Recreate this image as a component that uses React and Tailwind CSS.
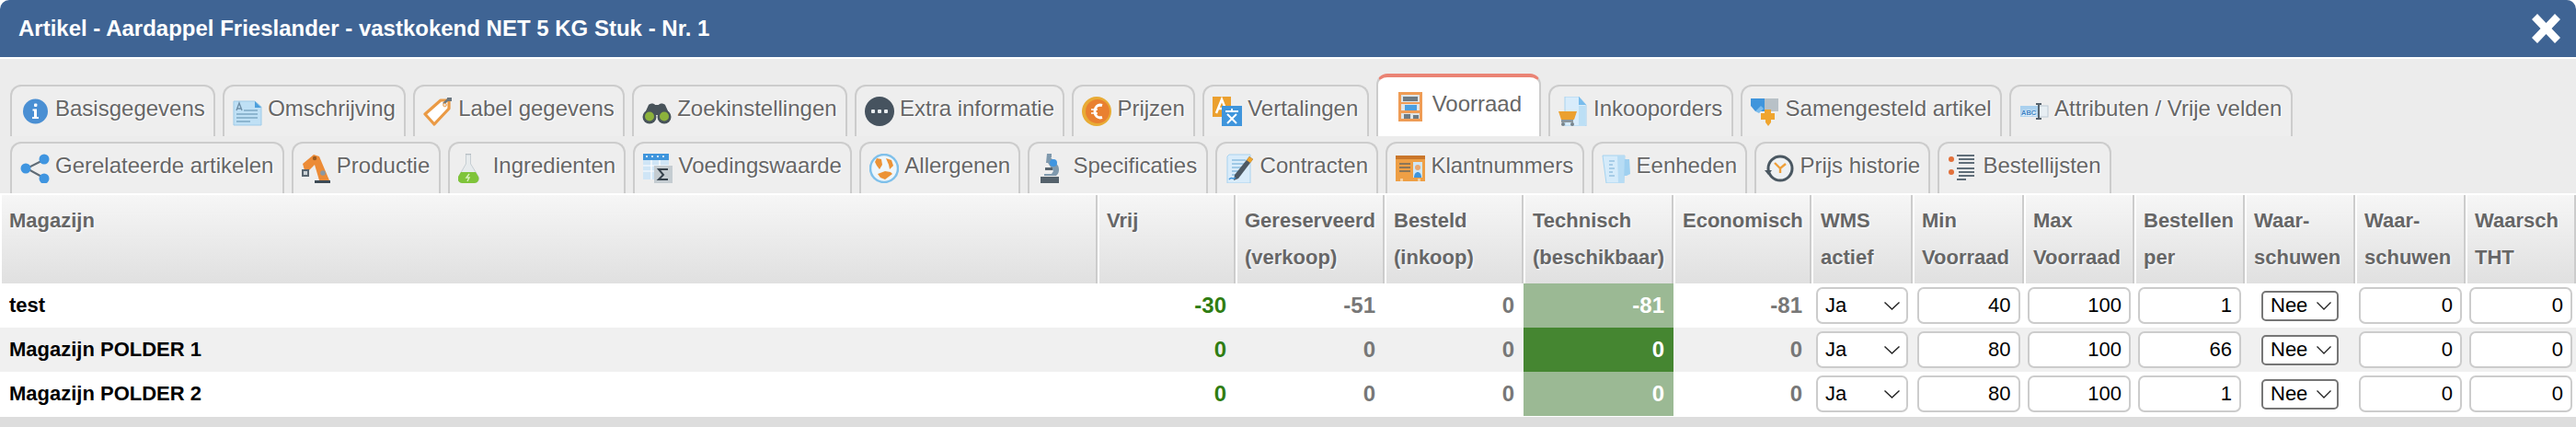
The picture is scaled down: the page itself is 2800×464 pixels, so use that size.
import React from "react";

const S = ({ children }) => (
  <svg viewBox="0 0 32 32" className="w-[32px] h-[32px] shrink-0">{children}</svg>
);

const icons = {
  info: (
    <S>
      <circle cx="16.5" cy="16" r="13.5" fill="#4a8fd3" />
      <rect x="15" y="7.5" width="3.4" height="3.4" rx="1" fill="#fff" />
      <path d="M13.5 13.5h4.5v8.5h2v2h-7v-2h2v-6.500h-1.500z" fill="#fff" />
    </S>
  ),
  doc: (
    <S>
      <path d="M1 5h23l7 6v20H1z" fill="#bfe0f5" stroke="#9fcbe8" />
      <path d="M24 5l7 7h-7z" fill="#4d9fdc" />
      <path d="M4 15l3-8 3 8M5 13h4" stroke="#6f8fa8" strokeWidth="1.400" fill="none" />
      <path d="M12 15h15M4 19h23M4 23h23M4 27h15" stroke="#7ea8c4" strokeWidth="1.500" />
    </S>
  ),
  tag: (
    <S>
      <path d="M19 4h9v9L12 30 2 19z" fill="#fff" stroke="#ea9a45" strokeWidth="3.200" strokeLinejoin="round" />
      <path d="M22 8l6-6" stroke="#6b7780" strokeWidth="2.500" />
      <rect x="26" y="1" width="5" height="4" fill="#6b7780" />
      <circle cx="23.500" cy="9" r="1.800" fill="#e8e8e8" stroke="#ea9a45" />
    </S>
  ),
  binoc: (
    <S>
      <path d="M7 9c2-2 6-2 7 0h4c1-2 5-2 7 0l5 11H2z" fill="#48535a" />
      <circle cx="8" cy="22" r="7.500" fill="#48535a" />
      <circle cx="24" cy="22" r="7.500" fill="#48535a" />
      <circle cx="8" cy="21.500" r="5" fill="#8cb23c" />
      <circle cx="24" cy="21.500" r="5" fill="#8cb23c" />
    </S>
  ),
  dots: (
    <S>
      <circle cx="16" cy="16" r="16" fill="#46535f" />
      <rect x="7" y="14" width="4" height="4" rx="1" fill="#e8edf0" />
      <rect x="14" y="14" width="4" height="4" rx="1" fill="#e8edf0" />
      <rect x="21" y="14" width="4" height="4" rx="1" fill="#e8edf0" />
    </S>
  ),
  coin: (
    <S>
      <circle cx="16" cy="16" r="16" fill="#e8ab35" />
      <circle cx="17" cy="16" r="13" fill="#e98030" />
      <path d="M22 9.500c-5-1.500-8 2-8 6.500s3 8 8 6.500" stroke="#fff" strokeWidth="3" fill="none" />
      <path d="M10 14h7M10 18h7" stroke="#fff" strokeWidth="1.500" />
    </S>
  ),
  trans: (
    <S>
      <rect x="0" y="0" width="20" height="22" fill="#eba02f" />
      <path d="M4 18L10 3l6 15M6.500 13h7" stroke="#fff" strokeWidth="2.500" fill="none" />
      <rect x="10" y="10" width="22" height="22" fill="#3f95dc" />
      <path d="M14 16h14M21 13v3M16 19l10 10M26 19L16 29" stroke="#fff" strokeWidth="2" fill="none" />
    </S>
  ),
  shelf: (
    <S>
      <rect x="3" y="0" width="26" height="32" fill="#ef9c55" />
      <rect x="6" y="3" width="20" height="8" fill="#dfe5e8" />
      <rect x="6" y="13" width="20" height="7" fill="#dfe5e8" />
      <rect x="6" y="23" width="20" height="6" fill="#dfe5e8" />
      <rect x="8" y="5" width="16" height="5" fill="#6e7b84" />
      <rect x="10" y="14" width="13" height="6" fill="#4b9fe0" />
      <rect x="9" y="24" width="7" height="5" fill="#6e7b84" />
      <rect x="19" y="25" width="6" height="4" fill="#6e7b84" />
    </S>
  ),
  cart: (
    <S>
      <path d="M7 0h15l8 9v23H7z" fill="#d8ecfb" stroke="#a8d2ef" />
      <path d="M22 0l8 9h-8z" fill="#78bcec" />
      <path d="M22 10h7v21h-7z" fill="#bcdff5" />
      <path d="M0 16h20l-3 9H3z" fill="#eba02f" />
      <path d="M3 25h13v3H3z" fill="#8a969e" />
      <circle cx="5" cy="30" r="2" fill="#77838b" />
      <circle cx="15" cy="30" r="2" fill="#77838b" />
    </S>
  ),
  puzzle: (
    <S>
      <path d="M0 2h15v14H5l-5-6z" fill="#3f95dc" />
      <path d="M15 2h15v14H15z" fill="#b8c1c7" />
      <path d="M5 16l6-6 3 3-5 5z" fill="#7cbcec" />
      <path d="M11 18h4v-4h7v4h4v7h-4v3l-3 4-3-4v-3h-5z" fill="#efa52f" />
    </S>
  ),
  attr: (
    <S>
      <rect x="1" y="10" width="20" height="12" fill="#a9d0ee" />
      <rect x="21" y="10" width="10" height="12" fill="#e7eef3" stroke="#bccad4" />
      <text x="2" y="19.500" fontSize="7.500" fontWeight="700" fill="#3b82c4" fontFamily="Liberation Sans">ABC</text>
      <path d="M18 8h6M18 24h6M21 8v16" stroke="#56636d" strokeWidth="2" />
    </S>
  ),
  share: (
    <S>
      <path d="M27 6L7 16l20 11" stroke="#5f6b75" strokeWidth="2" fill="none" />
      <circle cx="26" cy="6" r="5.500" fill="#3f95e0" />
      <circle cx="6" cy="16" r="5.500" fill="#3f95e0" />
      <circle cx="26" cy="27" r="5.500" fill="#3f95e0" />
    </S>
  ),
  robot: (
    <S>
      <path d="M1 11L13 1l6 2 11 26H19l-5-17-6 6H3z" fill="#ec8b36" />
      <path d="M14 29h17v3H14z" fill="#3d4a55" />
      <circle cx="14" cy="5" r="2.200" fill="#9b5b20" />
      <circle cx="23" cy="21" r="2.800" fill="#8a98a3" />
      <rect x="0" y="17" width="8" height="8" fill="#59656f" />
      <rect x="2" y="19" width="4" height="4" fill="#ccd3d8" />
    </S>
  ),
  flask: (
    <S>
      <rect x="8" y="0" width="6" height="2" fill="#aab1b6" />
      <path d="M8.500 1h5v10l8 13a5 5 0 0 1-4 8H5a5 5 0 0 1-4-8l7.500-13z" fill="#e7ebed" stroke="#c6ced3" />
      <path d="M3 20h16l3 5a5 5 0 0 1-5 7H5a5 5 0 0 1-5-7z" fill="#7fc43a" />
      <path d="M12 22l-3 4h3l-2 4" stroke="#d9f0bc" strokeWidth="1.500" fill="none" />
    </S>
  ),
  sigma: (
    <S>
      <rect x="0" y="0" width="28" height="28" fill="#cfe5f6" />
      <rect x="0" y="0" width="28" height="7" fill="#3f95dc" />
      <path d="M3 3h2M9 3h2M15 3h2M21 3h2" stroke="#fff" strokeWidth="1.600" />
      <path d="M0 13h28M0 19h28M9 7v21M18 7v21" stroke="#fff" strokeWidth="1.200" />
      <rect x="12" y="13" width="20" height="19" fill="#c4ccd1" />
      <path d="M27 17h-10l5 6-5 5h10" stroke="#36424c" strokeWidth="2" fill="none" />
    </S>
  ),
  globe: (
    <S>
      <circle cx="16" cy="16" r="15" fill="#eef6fb" stroke="#7fc0ea" strokeWidth="2.500" />
      <path d="M8 5l5 1 1 6-3 5-3-4-2-4zM18 5l6 2 2 6-4 4-1-5zM9 22l8-3 6 1 2 2-8 6-5-2z" fill="#ec9336" />
    </S>
  ),
  micro: (
    <S>
      <path d="M10 0h5v4h-1l8 9c2 4 1 9-2 11H7v-2h8l2-3-6-9-2 0z" fill="#7f99ad" />
      <circle cx="17" cy="10" r="4" fill="#3f95e0" />
      <rect x="8" y="15" width="8" height="3" fill="#57646e" />
      <rect x="3" y="25" width="20" height="7" fill="#55626c" />
    </S>
  ),
  contract: (
    <S>
      <path d="M4 1h23v31H2V3z" fill="#d9ecfa" stroke="#a8d2ef" />
      <path d="M7 7h15M7 11h15M7 15h14M7 19h10M7 23h7" stroke="#8cbde0" strokeWidth="1.300" />
      <path d="M26 3l4 3-16 21-5 2 1-6z" fill="#4d5963" />
      <path d="M26 3l4 3-3 4-4-3z" fill="#efa52f" />
      <path d="M4 28c3-4 4 1 7-2" stroke="#3f95dc" strokeWidth="1.500" fill="none" />
    </S>
  ),
  client: (
    <S>
      <rect x="0" y="2" width="32" height="28" fill="#ee9f45" />
      <rect x="0" y="2" width="32" height="4" fill="#c9762a" />
      <path d="M4 11h12M4 15h12M4 19h12" stroke="#8d7758" strokeWidth="1.800" />
      <rect x="19" y="9" width="10" height="17" fill="#cfe7f8" />
      <circle cx="24" cy="15" r="3" fill="#e9a872" />
      <path d="M20 26c0-8 8-8 8 0z" fill="#3f95dc" />
      <rect x="5" y="27" width="3" height="3" fill="#f7cf9c" />
      <rect x="24" y="27" width="3" height="3" fill="#f7cf9c" />
    </S>
  ),
  jug: (
    <S>
      <path d="M1 2h24l-1 30H5z" fill="#d5ebfa" stroke="#a6d3f0" />
      <path d="M24 6h6l1 16-4 2-3 0z" fill="#9fd0f0" />
      <path d="M17 2h8l-1 30h-6z" fill="#b7dcf4" />
      <path d="M8 8h6M8 12h4M8 16h6M8 20h4M8 24h6" stroke="#78aed3" strokeWidth="1.200" />
    </S>
  ),
  clock: (
    <S>
      <circle cx="17" cy="16" r="13" fill="#eef1f3" stroke="#4a5761" strokeWidth="3" />
      <path d="M11 10l6 6 6-5M17 16v5" stroke="#efa03a" strokeWidth="2.400" fill="none" />
      <path d="M0 18h8l-4 5z" fill="#4a5761" />
    </S>
  ),
  list: (
    <S>
      <circle cx="4" cy="6" r="3" fill="#e2703a" />
      <circle cx="4" cy="20" r="3" fill="#e2703a" />
      <path d="M10 2h19M12 6h17M12 10h17M10 16h19M12 20h17M12 24h17M10 28h10" stroke="#5f6d78" strokeWidth="2.200" />
    </S>
  ),
};

const row1 = [
  ["Basisgegevens", "info"],
  ["Omschrijving", "doc"],
  ["Label gegevens", "tag"],
  ["Zoekinstellingen", "binoc"],
  ["Extra informatie", "dots"],
  ["Prijzen", "coin"],
  ["Vertalingen", "trans"],
  ["Voorraad", "shelf", true],
  ["Inkooporders", "cart"],
  ["Samengesteld artikel", "puzzle"],
  ["Attributen / Vrije velden", "attr"],
];
const row2 = [
  ["Gerelateerde artikelen", "share"],
  ["Productie", "robot"],
  ["Ingredienten", "flask"],
  ["Voedingswaarde", "sigma"],
  ["Allergenen", "globe"],
  ["Specificaties", "micro"],
  ["Contracten", "contract"],
  ["Klantnummers", "client"],
  ["Eenheden", "jug"],
  ["Prijs historie", "clock"],
  ["Bestellijsten", "list"],
];

function Tab({ label, icon, active }) {
  if (active) {
    return (
      <div className="h-[68px] flex items-start gap-[8px] pl-[19px] pr-[19px] pt-[16px] bg-white rounded-t-[12px] border-x-2 border-[#ccc] border-t-[4px] border-t-[#ea8374] text-[24px] leading-[32px] text-[#666]">
        {icons[icon]}
        <span className="-mt-[3px]">{label}</span>
      </div>
    );
  }
  return (
    <div className="h-[56px] flex items-start gap-[6px] pl-[9px] pr-[9.4px] pt-[11px] bg-[#eee] rounded-t-[12px] border-x-2 border-t-2 border-[#ccc] text-[24px] leading-[32px] text-[#666] [text-shadow:0_0_3px_#fff,1px_1px_1px_#fff]">
      {icons[icon]}
      <span className="-mt-[3px]">{label}</span>
    </div>
  );
}

const th =
  "align-top text-left font-bold text-[22px] leading-[40px] text-[#666] pt-[8px] pb-[8px] pl-[8px] pr-0 border-l-2 border-l-white border-r-2 border-r-[#ccc] bg-gradient-to-b from-[#f6f6f6] to-[#e0e0e0] whitespace-nowrap overflow-hidden [text-shadow:1px_1px_2px_#fff]";

const numBase = "p-0 pr-[10px] text-right font-bold text-[24px]";

function Sel({ value, small }) {
  if (small) {
    return (
      <div className="relative w-[84px] h-[33px] mx-auto">
        <select
          defaultValue={value}
          className="appearance-none w-full h-full bg-white border-2 border-[#767676] rounded-[5px] pl-[8px] text-[22px] leading-[28px] text-black outline-none"
        >
          <option>Nee</option>
          <option>Ja</option>
        </select>
        <svg viewBox="0 0 16 9" className="absolute right-[8px] top-[12px] w-[16px] h-[9px] pointer-events-none">
          <path d="M.5.500L8 8 15.500.500" stroke="#222" strokeWidth="1.300" fill="none" />
        </svg>
      </div>
    );
  }
  return (
    <div className="relative w-[100px] h-[40px] mx-auto">
      <select
        defaultValue={value}
        className="appearance-none w-full h-full bg-white border-2 border-[#ccc] rounded-[7px] pl-[8px] text-[22px] leading-[28px] text-black outline-none"
      >
        <option>Ja</option>
        <option>Nee</option>
      </select>
      <svg viewBox="0 0 17 9" className="absolute right-[9px] top-[16px] w-[17px] h-[9px] pointer-events-none">
        <path d="M.5.500L8.500 8 16.500.500" stroke="#222" strokeWidth="1.400" fill="none" />
      </svg>
    </div>
  );
}

function Num({ value }) {
  return (
    <input
      type="text"
      readOnly
      value={value}
      className="block mx-auto w-[112px] h-[40px] bg-white border-2 border-[#ccc] rounded-[7px] text-right pr-[8px] text-[22px] text-black outline-none"
    />
  );
}

const rows = [
  { name: "test", vrij: "-30", res: "-51", best: "0", tech: "-81", eco: "-81", min: "40", max: "100", per: "1", bg: "bg-white", techBg: "bg-[#9bb994]" },
  { name: "Magazijn POLDER 1", vrij: "0", res: "0", best: "0", tech: "0", eco: "0", min: "80", max: "100", per: "66", bg: "bg-[#f0f0f0]", techBg: "bg-[#458631]" },
  { name: "Magazijn POLDER 2", vrij: "0", res: "0", best: "0", tech: "0", eco: "0", min: "80", max: "100", per: "1", bg: "bg-white", techBg: "bg-[#9bb994]" },
];

export default function App() {
  return (
    <div className="w-[2800px] h-[464px] overflow-hidden flex flex-col bg-white font-['Liberation_Sans',Arial,sans-serif]">
      <div className="h-[62px] shrink-0 flex items-center justify-between bg-[#3f6494] rounded-t-[10px] pl-[20px] pr-[17px]">
        <span className="text-[24px] font-bold text-white">
          Artikel - Aardappel Frieslander - vastkokend NET 5 KG Stuk - Nr. 1
        </span>
        <svg viewBox="0 0 31 32" className="w-[31px] h-[32px]">
          <path d="M6 0l9.500 10L25 0l6 6-9.500 10L31 26l-6 6-9.500-10L6 32l-6-6 9.500-10L0 6z" fill="#fff" />
        </svg>
      </div>
      <div className="h-[146px] mt-[2px] shrink-0 bg-[#ececec] pl-[11px] pt-[16px]">
        <div className="h-[68px] flex items-end gap-[8px]">
          {row1.map(([l, i, a]) => (
            <Tab key={l} label={l} icon={i} active={a} />
          ))}
        </div>
        <div className="mt-[6px] h-[56px] flex items-end gap-[8px]">
          {row2.map(([l, i]) => (
            <Tab key={l} label={l} icon={i} />
          ))}
        </div>
      </div>
      <table className="mt-[2px] shrink-0 table-fixed border-separate border-spacing-0 w-[2800px]">
        <colgroup>
          <col className="w-[1193px]" />
          <col className="w-[150px]" />
          <col className="w-[162px]" />
          <col className="w-[151px]" />
          <col className="w-[163px]" />
          <col className="w-[150px]" />
          <col className="w-[110px]" />
          <col className="w-[121px]" />
          <col className="w-[120px]" />
          <col className="w-[120px]" />
          <col className="w-[120px]" />
          <col className="w-[120px]" />
          <col className="w-[120px]" />
        </colgroup>
        <thead>
          <tr>
            <th className={th}>Magazijn</th>
            <th className={th}>Vrij</th>
            <th className={th}>Gereserveerd<br />(verkoop)</th>
            <th className={th}>Besteld<br />(inkoop)</th>
            <th className={th}>Technisch<br />(beschikbaar)</th>
            <th className={th}>Economisch</th>
            <th className={th}>WMS<br />actief</th>
            <th className={th}>Min<br />Voorraad</th>
            <th className={th}>Max<br />Voorraad</th>
            <th className={th}>Bestellen<br />per</th>
            <th className={th}>Waar-<br />schuwen</th>
            <th className={th}>Waar-<br />schuwen</th>
            <th className={th}>Waarsch<br />THT</th>
          </tr>
        </thead>
        <tbody>
          {rows.map((r) => (
            <tr key={r.name} className={r.bg + " h-[48px]"}>
              <td className="p-0 pl-[10px] pb-[2px] font-bold text-[22px] text-black">{r.name}</td>
              <td className={numBase + " text-[#2f7d12]"}>{r.vrij}</td>
              <td className={numBase + " text-[#777]"}>{r.res}</td>
              <td className={numBase + " text-[#777]"}>{r.best}</td>
              <td className={numBase + " text-white " + r.techBg}>{r.tech}</td>
              <td className={numBase + " text-[#777]"}>{r.eco}</td>
              <td className="p-0"><Sel value="Ja" /></td>
              <td className="p-0"><Num value={r.min} /></td>
              <td className="p-0"><Num value={r.max} /></td>
              <td className="p-0"><Num value={r.per} /></td>
              <td className="p-0"><Sel value="Nee" small /></td>
              <td className="p-0"><Num value="0" /></td>
              <td className="p-0"><Num value="0" /></td>
            </tr>
          ))}
        </tbody>
      </table>
      <div className="mt-[1px] flex-1 bg-[#dddddd]" />
    </div>
  );
}
